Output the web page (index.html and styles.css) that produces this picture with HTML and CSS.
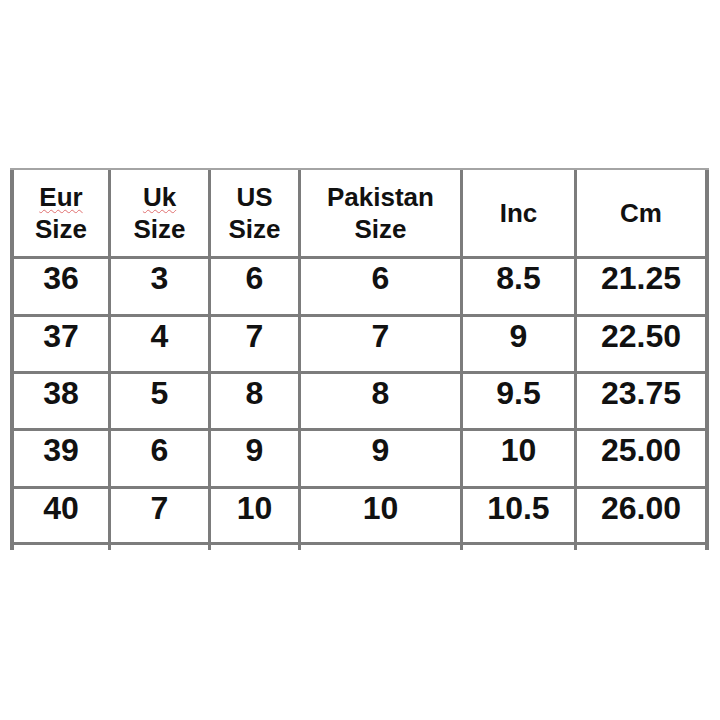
FILE: index.html
```html
<!DOCTYPE html>
<html lang="en">
<head>
<meta charset="utf-8">
<title>Size Chart</title>
<link rel="stylesheet" href="styles.css">
</head>
<body>
<div class="chart" role="table">
  <div class="head" role="columnheader"><span class="line"><span class="spell">Eur</span></span><span class="line">Size</span></div>
  <div class="head" role="columnheader"><span class="line"><span class="spell">Uk</span></span><span class="line">Size</span></div>
  <div class="head" role="columnheader"><span class="line">US</span><span class="line">Size</span></div>
  <div class="head" role="columnheader"><span class="line">Pakistan</span><span class="line">Size</span></div>
  <div class="head" role="columnheader"><span class="line">Inc</span></div>
  <div class="head" role="columnheader"><span class="line">Cm</span></div>

  <div class="cell">36</div><div class="cell">3</div><div class="cell">6</div><div class="cell">6</div><div class="cell">8.5</div><div class="cell">21.25</div>
  <div class="cell">37</div><div class="cell">4</div><div class="cell">7</div><div class="cell">7</div><div class="cell">9</div><div class="cell">22.50</div>
  <div class="cell">38</div><div class="cell">5</div><div class="cell">8</div><div class="cell">8</div><div class="cell">9.5</div><div class="cell">23.75</div>
  <div class="cell">39</div><div class="cell">6</div><div class="cell">9</div><div class="cell">9</div><div class="cell">10</div><div class="cell">25.00</div>
  <div class="cell">40</div><div class="cell">7</div><div class="cell">10</div><div class="cell">10</div><div class="cell">10.5</div><div class="cell">26.00</div>

  <div class="stub"></div><div class="stub"></div><div class="stub"></div><div class="stub"></div><div class="stub"></div><div class="stub"></div>
</div>
</body>
</html>
```

FILE: styles.css
```css
html, body {
  margin: 0;
  padding: 0;
  background: #ffffff;
}

body {
  font-family: "Liberation Sans", Arial, sans-serif;
  color: #111111;
}

.chart {
  display: grid;
  grid-template-columns: 94px 97px 87px 159px 111px 128px;
  grid-template-rows: 86px 55px 54px 54px 55px 53px 5px;
  gap: 3px;
  width: max-content;
  margin: 168px 0 0 10px;
  padding: 0 4px;
  background: #7c7c7c;
  border-top: 2px solid #a4a4a4;
}

.head {
  background: #ffffff;
  display: flex;
  flex-direction: column;
  align-items: center;
  justify-content: center;
  font-weight: bold;
  font-size: 26px;
  line-height: 32px;
  padding-bottom: 1px;
}

.line {
  display: block;
}

.spell {
  text-decoration-line: underline;
  text-decoration-style: wavy;
  text-decoration-color: #e07070;
  text-decoration-thickness: 1px;
  text-underline-offset: 3px;
}

.cell {
  background: #ffffff;
  text-align: center;
  font-weight: bold;
  font-size: 32px;
  line-height: 36px;
  padding-top: 1px;
}

.stub {
  background: #ffffff;
}
```
